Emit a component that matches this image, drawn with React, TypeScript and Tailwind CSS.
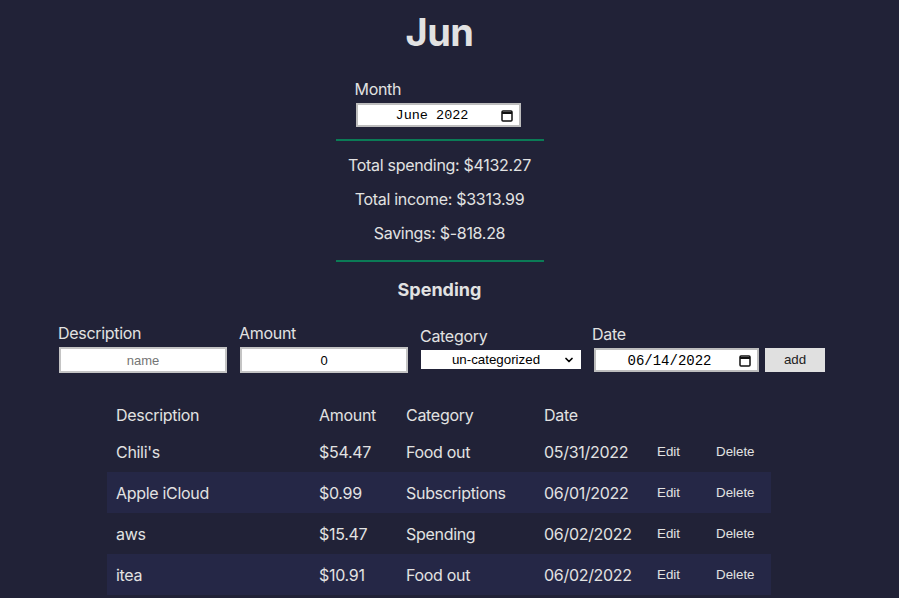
import { ChevronDown } from 'lucide-react'

const ROWS = [
  { desc: "Chili's", amount: '$54.47', category: 'Food out', date: '05/31/2022' },
  { desc: 'Apple iCloud', amount: '$0.99', category: 'Subscriptions', date: '06/01/2022' },
  { desc: 'aws', amount: '$15.47', category: 'Spending', date: '06/02/2022' },
  { desc: 'itea', amount: '$10.91', category: 'Food out', date: '06/02/2022' },
]

const sans = "font-['Inter',sans-serif]"
const arial = "font-['Liberation_Sans',Arial,sans-serif]"
const mono = "font-['Liberation_Mono','Courier_New',monospace]"

function CalendarIcon() {
  return (
    <svg width="12" height="13" viewBox="0 0 12 13" fill="none" stroke="#111" strokeWidth="1.5">
      <rect x="1" y="2" width="10" height="10" rx="1" />
      <line x1="1" y1="4" x2="11" y2="4" strokeWidth="2" />
    </svg>
  )
}

export default function App() {
  return (
    <div className={`min-h-[598px] bg-[#212237] text-[#e2e2e2] tracking-[-0.3px] ${sans}`}>
      {/* Header + summary */}
      <div className="w-[879px] flex flex-col items-center pt-[8px]">
        <h1 className="text-[38px] leading-[48px] font-bold tracking-[-0.5px]">Jun</h1>

        <div className="mt-[21px] w-[168px]">
          <div className="text-[16px] leading-[24px] -ml-[1px]">Month</div>
          <div
            className={`mt-[2px] flex items-center w-[165px] h-[24px] bg-white text-black text-[13.5px] tracking-normal border-2 border-[#bdbdbd] pr-[6px] ${mono}`}
          >
            <span className="flex-1 text-center pl-[6px] pt-[3px]">June 2022</span>
            <CalendarIcon />
          </div>
        </div>

        <div className="mt-[12px] w-[208px] h-[2px] bg-[#0b7b56]" />

        <div className="mt-[12px] flex flex-col items-center gap-[10px] text-[16px] leading-[24px]">
          <p>Total spending: $4132.27</p>
          <p>Total income: $3313.99</p>
          <p>Savings: $-818.28</p>
        </div>

        <div className="mt-[15px] w-[208px] h-[2px] bg-[#0b7b56]" />

        <h2 className="mt-[14px] text-[18px] leading-[27px] font-bold tracking-normal">Spending</h2>
      </div>

      {/* Add form */}
      <div className="mt-[18px] flex items-start pl-[58px]">
        <div className="w-[181px]">
          <div className="text-[16px] leading-[24px]">Description</div>
          <input
            placeholder="name"
            className={`mt-[2px] ml-px block w-[168px] h-[26px] bg-white text-black text-[13px] tracking-normal text-center border-2 border-[#c4c4c4] placeholder:text-[#757575] ${arial}`}
          />
        </div>
        <div className="w-[181px]">
          <div className="text-[16px] leading-[24px]">Amount</div>
          <input
            defaultValue="0"
            className={`mt-[2px] ml-px block w-[168px] h-[26px] bg-white text-black text-[13px] tracking-normal text-center border-2 border-[#c4c4c4] ${arial}`}
          />
        </div>
        <div className="w-[172px] pt-[3px]">
          <div className="text-[16px] leading-[24px]">Category</div>
          <div
            className={`mt-[2px] ml-px flex items-center w-[160px] h-[19px] bg-white text-black text-[13.33px] tracking-normal ${arial}`}
          >
            <span className="flex-1 text-center pl-[8px]">un-categorized</span>
            <ChevronDown className="w-[12px] h-[12px] mr-[6px]" strokeWidth={3.5} />
          </div>
        </div>
        <div className="w-[173px] pt-[1px]">
          <div className="text-[16px] leading-[24px]">Date</div>
          <div
            className={`mt-[2px] ml-[2px] flex items-center w-[165px] h-[24px] bg-white text-black text-[14px] tracking-normal border-2 border-[#bdbdbd] pr-[6px] ${mono}`}
          >
            <span className="flex-1 text-center pl-[4px] pt-[2px]">06/14/2022</span>
            <CalendarIcon />
          </div>
        </div>
        <button
          className={`mt-[27px] w-[60px] h-[24px] bg-[#e0e0e0] text-[#222] text-[13.33px] tracking-normal ${arial}`}
        >
          add
        </button>
      </div>

      {/* Table */}
      <div className="mt-[22px] ml-[107px] w-[664px] text-[16px] leading-[24px]">
        <div className="grid grid-cols-[203px_87px_138px_113px_59px_1fr] h-[36px] pt-[8px] pl-[9px]">
          <div>Description</div>
          <div>Amount</div>
          <div>Category</div>
          <div>Date</div>
          <div />
          <div />
        </div>
        {ROWS.map((r, i) => (
          <div
            key={r.desc}
            className={`grid grid-cols-[203px_87px_138px_113px_59px_1fr] items-center h-[41px] pl-[9px] ${
              i % 2 === 1 ? 'bg-[#252746]' : ''
            }`}
          >
            <div>{r.desc}</div>
            <div>{r.amount}</div>
            <div>{r.category}</div>
            <div>{r.date}</div>
            <button className={`text-left text-[13.33px] tracking-normal ${arial}`}>Edit</button>
            <button className={`text-left text-[13.33px] tracking-normal ${arial}`}>Delete</button>
          </div>
        ))}
      </div>
    </div>
  )
}
